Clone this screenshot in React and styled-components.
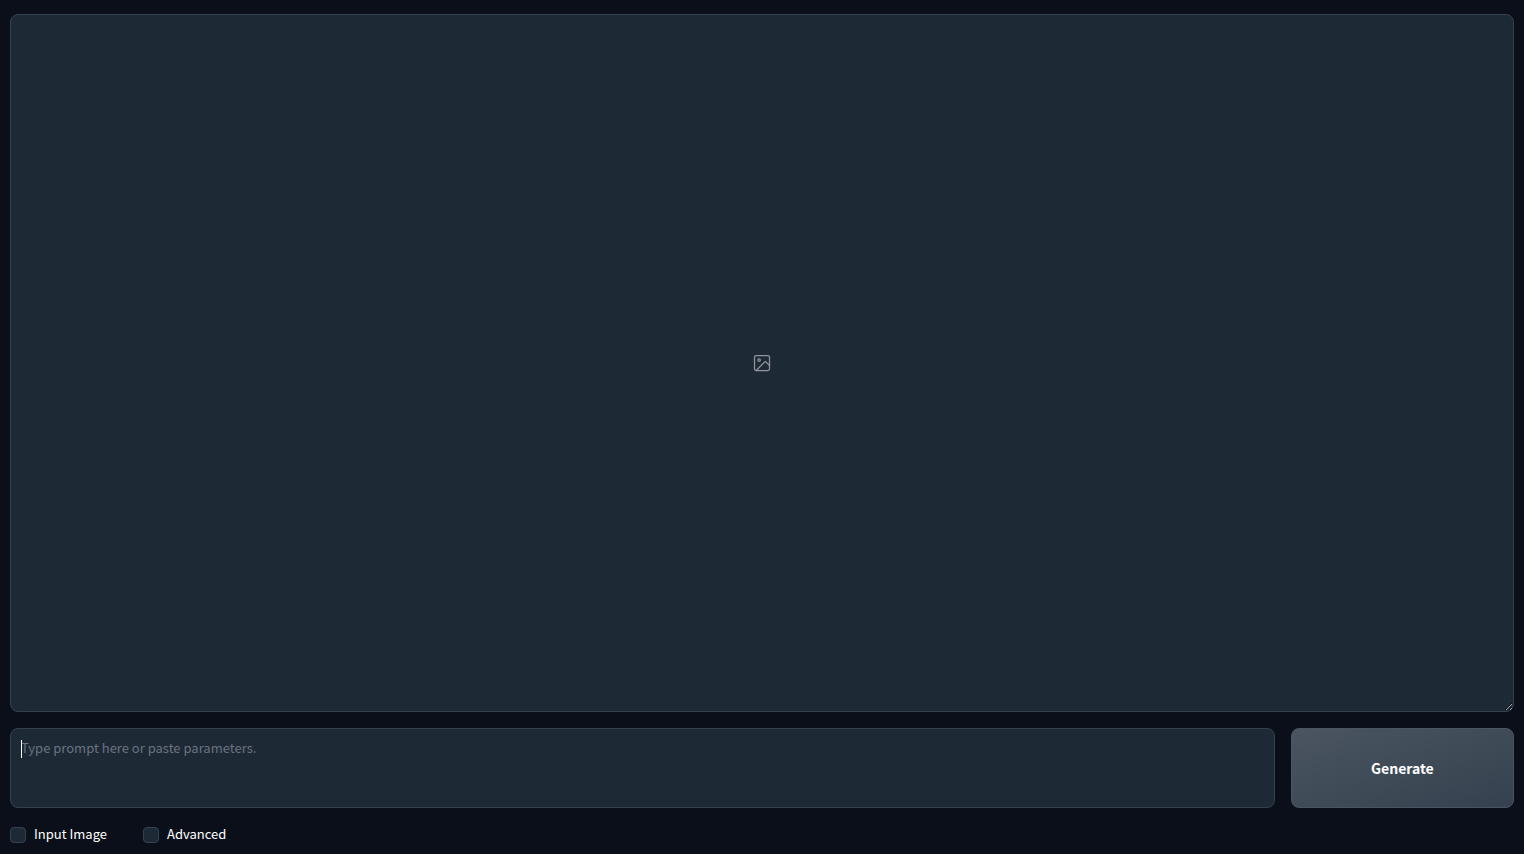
import React from 'react';
import styled, { createGlobalStyle } from 'styled-components';
import { FiImage } from 'react-icons/fi';

const GlobalStyle = createGlobalStyle`
  * {
    box-sizing: border-box;
  }

  body {
    margin: 0;
    background: #0b0f19;
    color: #ffffff;
    font-family: "Noto Sans CJK SC", "Noto Sans", sans-serif;
    font-size: 13px;
    line-height: 20px;
  }
`;

const Page = styled.main`
  display: flex;
  flex-direction: column;
  gap: 16px;
  min-height: 100vh;
  padding: 14px 10px 9px;
`;

const Preview = styled.section`
  display: flex;
  flex: 1;
  align-items: center;
  justify-content: center;
  min-height: 240px;
  overflow: hidden;
  resize: vertical;
  border: 1px solid #36414f;
  border-radius: 8px;
  background: #1e2936;
`;

const EmptyIcon = styled(FiImage).attrs({
  'aria-label': 'No image',
  strokeWidth: 1.5
})`
  width: 20px;
  height: 20px;
  color: #8f959b;
`;

const PromptRow = styled.div`
  display: grid;
  grid-template-columns: 17fr 3fr;
  gap: 16px;
`;

const PromptField = styled.div`
  position: relative;
  display: flex;
`;

const Prompt = styled.textarea`
  flex: 1;
  min-width: 0;
  height: 80px;
  padding: 9px 10px;
  border: 1px solid #36414f;
  border-radius: 8px;
  outline: none;
  resize: none;
  background: #1e2936;
  color: #ffffff;
  caret-color: transparent;
  font: inherit;

  &::placeholder {
    color: #6b7280;
    opacity: 1;
  }
`;

const Caret = styled.span`
  position: absolute;
  top: 12px;
  left: 11px;
  width: 1px;
  height: 18px;
  background: #ffffff;
  pointer-events: none;
`;

const GenerateButton = styled.button`
  border: 1px solid #4a5561;
  border-radius: 8px;
  background: linear-gradient(to bottom right, #4a5561, #36414f);
  color: #ffffff;
  font: inherit;
  font-size: 14px;
  font-weight: 700;
  cursor: pointer;
`;

const Options = styled.div`
  display: flex;
  gap: 16px;
`;

const Option = styled.label`
  display: flex;
  align-items: center;
  gap: 8px;
  min-width: 117px;
  height: 21px;
  cursor: pointer;
`;

const OptionText = styled.span`
  padding-bottom: 1px;
`;

const Checkbox = styled.input.attrs({ type: 'checkbox' })`
  width: 16px;
  height: 16px;
  margin: 0;
  appearance: none;
  border: 1px solid #36414f;
  border-radius: 4px;
  background: #1e2936;

  &:checked {
    background: #4a5561;
  }
`;

class App extends React.Component {
  state = {
    prompt: ''
  }

  onChangePrompt = (e) => {
    this.setState({ prompt: e.target.value });
  }

  render() {
    let { prompt } = this.state;
    return (
      <React.Fragment>
        <GlobalStyle />
        <Page>
          <Preview>
            <EmptyIcon />
          </Preview>
          <PromptRow>
            <PromptField>
              <Prompt
                aria-label="Prompt"
                placeholder="Type prompt here or paste parameters."
                value={prompt}
                onChange={this.onChangePrompt}
              />
              {!prompt && <Caret />}
            </PromptField>
            <GenerateButton type="button">Generate</GenerateButton>
          </PromptRow>
          <Options>
            <Option>
              <Checkbox />
              <OptionText>Input Image</OptionText>
            </Option>
            <Option>
              <Checkbox />
              <OptionText>Advanced</OptionText>
            </Option>
          </Options>
        </Page>
      </React.Fragment>
    );
  }
}

export default App;
